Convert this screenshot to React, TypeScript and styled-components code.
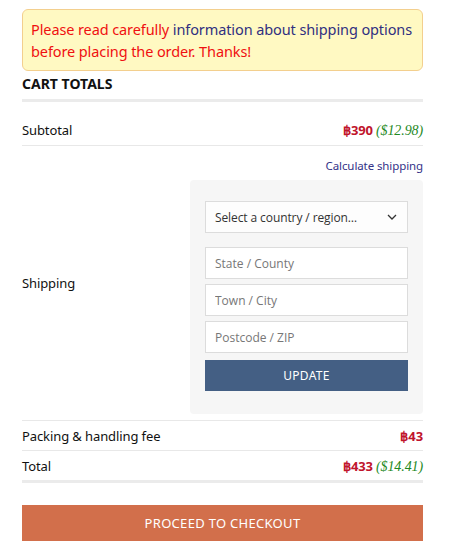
import React from 'react'
import styled, { createGlobalStyle } from 'styled-components'

const Global = createGlobalStyle`
  body {
    margin: 0;
    background: #ffffff;
    font-family: 'Noto Sans', 'Open Sans', sans-serif;
    color: #111;
  }
`

const Page = styled.div`
  width: 401px;
  padding: 9px 26px 10px 22px;
`

const Notice = styled.div`
  background: #fff9c2;
  border: 1px solid #f3cf8e;
  border-radius: 6px;
  padding: 8px 4px 8px 8px;
  font-size: 14.5px;
  line-height: 22px;
  letter-spacing: -0.1px;
  color: #f01010;
`

const NoticeLink = styled.a`
  color: #303080;
  text-decoration: none;
`

const Heading = styled.h2`
  margin: 4px 0 0;
  padding-bottom: 6px;
  font-size: 14px;
  line-height: 18px;
  font-weight: 700;
  color: #111;
  border-bottom: 3px solid #ebebeb;
`

const Row = styled.div<{ $h?: number; $top?: number; $thick?: boolean }>`
  display: flex;
  align-items: center;
  justify-content: space-between;
  min-height: ${p => p.$h ?? 29}px;
  padding-top: ${p => p.$top ?? 0}px;
  border-bottom: ${p => (p.$thick ? '3px solid #ebebeb' : '1px solid #e8e8e8')};
  font-size: 13px;
  letter-spacing: -0.1px;
`

const Label = styled.div`
  color: #111;
`

const Amount = styled.div`
  display: flex;
  align-items: baseline;
  gap: 3px;
`

const Baht = styled.span`
  color: #c0142c;
  font-weight: 700;
  font-size: 13px;
`

const Usd = styled.span`
  color: #1f8a1f;
  font-style: italic;
  font-family: 'Liberation Serif', serif;
  font-size: 14px;
`

const ShipCol = styled.div`
  display: flex;
  flex-direction: column;
  align-items: flex-end;
  padding: 12px 0 6px;
`

const CalcLink = styled.a`
  color: #333388;
  font-size: 11.5px;
  line-height: 16px;
  text-decoration: none;
  margin-bottom: 6px;
`

const ShipBox = styled.div`
  width: 203px;
  background: #f6f6f6;
  border-radius: 4px;
  padding: 21px 15px 23px;
  display: flex;
  flex-direction: column;
`

const Select = styled.div`
  height: 30px;
  border: 1px solid #dcdcdc;
  background: #fdfdfd;
  display: flex;
  align-items: center;
  justify-content: space-between;
  padding: 0 10px 0 9px;
  font-family: 'Open Sans', sans-serif;
  font-size: 12px;
  color: #333;
  margin-bottom: 14px;
`

const Field = styled.input`
  box-sizing: border-box;
  height: 32px;
  width: 100%;
  border: 1px solid #dcdcdc;
  background: #fff;
  padding: 0 9px;
  margin: 0 0 5px;
  font-family: 'Open Sans', sans-serif;
  font-size: 12px;
  outline: none;
  &::placeholder {
    color: #777;
  }
`

const UpdateButton = styled.button`
  height: 31px;
  margin-top: 2px;
  border: none;
  background: #445f84;
  color: #fff;
  font-family: 'Noto Sans', sans-serif;
  font-size: 12px;
  letter-spacing: 0.3px;
`

const Checkout = styled.button`
  display: block;
  width: 100%;
  height: 36px;
  margin-top: 22px;
  border: none;
  background: #d26f4b;
  color: #fff;
  font-family: 'Noto Sans', sans-serif;
  font-size: 13px;
  letter-spacing: 0.3px;
`

const Chevron = () => (
  <svg width="10" height="6" viewBox="0 0 10 6" fill="none">
    <path d="M1 1l4 4 4-4" stroke="#333" strokeWidth="1.3" />
  </svg>
)

export default function App() {
  return (
    <Page>
      <Global />
      <Notice>
        Please read carefully <NoticeLink href="#">information about shipping options</NoticeLink> before
        placing the order. Thanks!
      </Notice>
      <Heading>CART TOTALS</Heading>
      <Row $h={30} $top={13}>
        <Label>Subtotal</Label>
        <Amount>
          <Baht>฿390</Baht>
          <Usd>($12.98)</Usd>
        </Amount>
      </Row>
      <Row>
        <Label>Shipping</Label>
        <ShipCol>
          <CalcLink href="#">Calculate shipping</CalcLink>
          <ShipBox>
            <Select>
              <span>Select a country / region…</span>
              <Chevron />
            </Select>
            <Field placeholder="State / County" />
            <Field placeholder="Town / City" />
            <Field placeholder="Postcode / ZIP" />
            <UpdateButton>UPDATE</UpdateButton>
          </ShipBox>
        </ShipCol>
      </Row>
      <Row>
        <Label>Packing &amp; handling fee</Label>
        <Amount>
          <Baht>฿43</Baht>
        </Amount>
      </Row>
      <Row $thick>
        <Label>Total</Label>
        <Amount>
          <Baht>฿433</Baht>
          <Usd>($14.41)</Usd>
        </Amount>
      </Row>
      <Checkout>PROCEED TO CHECKOUT</Checkout>
    </Page>
  )
}
